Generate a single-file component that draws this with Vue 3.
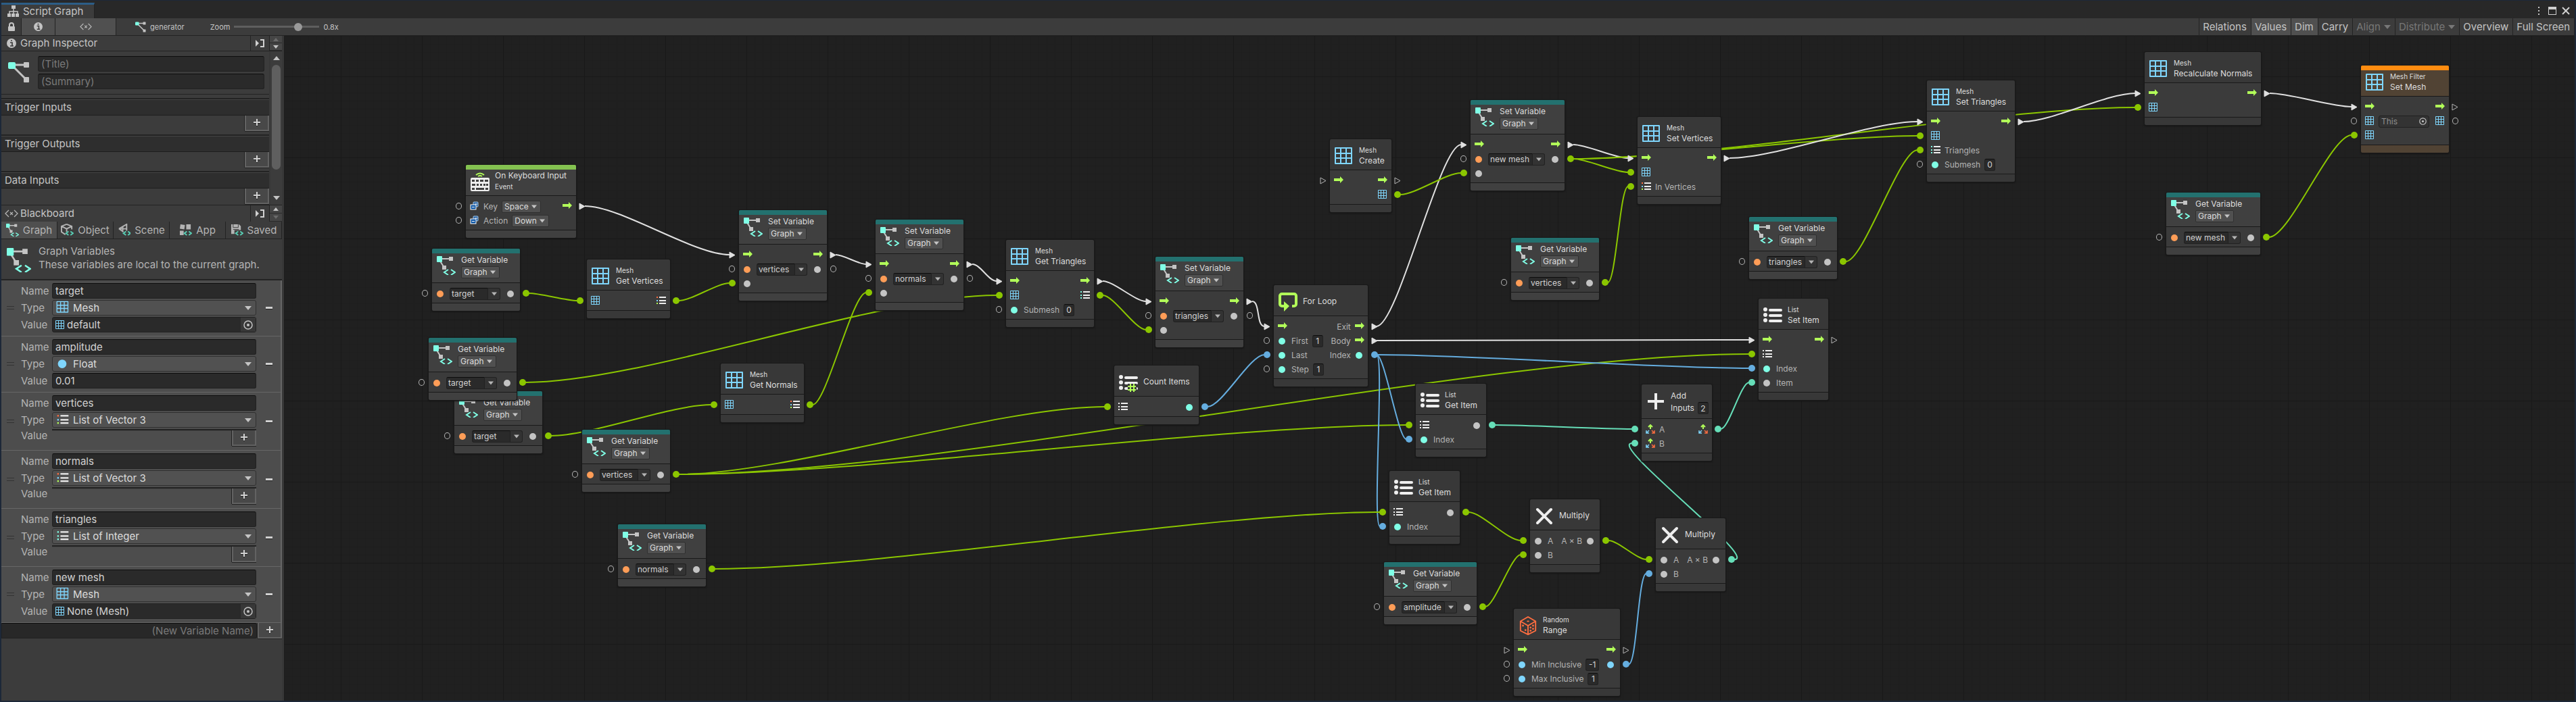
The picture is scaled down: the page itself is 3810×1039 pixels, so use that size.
<script setup>
import { ref, computed } from 'vue'

const zoom = ref(78)
const view = { x: 420, y: 53 }

const tools = [
  { text: 'Relations' },
  { text: 'Values', on: true },
  { text: 'Dim', on: true },
  { text: 'Carry' },
  { text: 'Align', menu: true },
  { text: 'Distribute', menu: true },
  { text: 'Overview' },
  { text: 'Full Screen' }
]
const sections = ['Trigger Inputs', 'Trigger Outputs', 'Data Inputs']
const scopes = [
  { text: 'Graph', icon: 'graphvar', on: true },
  { text: 'Object', icon: 'object' },
  { text: 'Scene', icon: 'scene' },
  { text: 'App', icon: 'app' },
  { text: 'Saved', icon: 'saved' }
]
const variables = ref([
  { name: 'target', type: 'Mesh', icon: 'mesh', object: 'default' },
  { name: 'amplitude', type: 'Float', icon: 'float', value: '0.01' },
  { name: 'vertices', type: 'List of Vector 3', icon: 'list-rgb', list: true },
  { name: 'normals', type: 'List of Vector 3', icon: 'list-rgb', list: true },
  { name: 'triangles', type: 'List of Integer', icon: 'list-int', list: true },
  { name: 'new mesh', type: 'Mesh', icon: 'mesh', object: 'None (Mesh)' }
])

const flow = (link, label) => ({ icon: 'flow', flow: true, link, label })
const port = (icon, link, extra) => ({ icon, link, ...extra })

const getVar = (id, x, y, name, w = 130) => ({
  id, x, y, w, kind: 'tall', strip: 'teal', icon: 'graphvar', title: 'Get Variable', scope: 'Graph',
  ins: [port('orange', '', { variable: name })], outs: [port('grey', 'green')]
})
const setVar = (id, x, y, name, w = 130, linked = '') => ({
  id, x, y, w, kind: 'tall', strip: 'teal', icon: 'graphvar', title: 'Set Variable', scope: 'Graph',
  ins: [flow('white'), port('orange', '', { variable: name }), port('grey', 'green')],
  outs: [flow('white'), port('grey', linked)]
})
const unit = (id, x, y, w, icon, over, title, ins, outs, extra = {}) => ({
  id, x, y, w, icon, over, title, ins, outs, kind: 'unit', ...extra
})

const nodes = [
  unit('key', 689, 244, 163, 'keyboard', '', 'On Keyboard Input',
    [port('enum', '', { label: 'Key', choice: 'Space' }), port('enum', '', { label: 'Action', choice: 'Down' })],
    [flow('white')], { strip: 'lime', under: 'Event' }),
  getVar('gTarget1', 639, 368, 'target'),
  unit('getVertices', 868, 384, 123, 'mesh', 'Mesh', 'Get Vertices', [port('mesh-s', 'green')], [port('list-rgb', 'green')]),
  setVar('sVertices', 1093, 311, 'vertices'),
  getVar('gTarget3', 672, 579, 'target'),
  getVar('gTarget2', 634, 500, 'target'),
  getVar('gVertices', 861, 636, 'vertices'),
  getVar('gNormals', 914, 776, 'normals'),
  unit('getNormals', 1066, 538, 123, 'mesh', 'Mesh', 'Get Normals', [port('mesh-s', 'green')], [port('list-rgb', 'green')]),
  setVar('sNormals', 1295, 325, 'normals'),
  unit('getTriangles', 1488, 355, 130, 'mesh', 'Mesh', 'Get Triangles',
    [flow('white'), port('mesh-s', 'green'), port('aqua', '', { label: 'Submesh', field: '0' })],
    [flow('white'), port('list-int', 'green')]),
  setVar('sTriangles', 1709, 380, 'triangles'),
  unit('count', 1648, 541, 125, 'count', '', 'Count Items', [port('list', 'green')], [port('aqua', 'blue')]),
  unit('loop', 1884, 422, 139, 'loop', '', 'For Loop',
    [flow('white'), port('aqua', '', { label: 'First', field: '1' }), port('aqua', 'blue', { label: 'Last' }), port('aqua', '', { label: 'Step', field: '1' })],
    [flow('white', 'Exit'), flow('white', 'Body'), port('aqua', 'blue', { label: 'Index' })]),
  unit('create', 1967, 206, 91, 'mesh', 'Mesh', 'Create', [flow('')], [flow(''), port('mesh-s', 'green')]),
  setVar('sNewMesh', 2175, 148, 'new mesh', 139, 'green'),
  unit('setVertices', 2422, 173, 123, 'mesh', 'Mesh', 'Set Vertices',
    [flow('white'), port('mesh-s', 'green'), port('list-rgb', 'green', { label: 'In Vertices' })], [flow('white')]),
  getVar('gVertices2', 2235, 352, 'vertices'),
  unit('setTriangles', 2850, 119, 130, 'mesh', 'Mesh', 'Set Triangles',
    [flow('white'), port('mesh-s', 'green'), port('list-int', 'green', { label: 'Triangles' }), port('aqua', '', { label: 'Submesh', field: '0' })],
    [flow('white')]),
  getVar('gTriangles', 2587, 321, 'triangles'),
  unit('recalc', 3172, 77, 172, 'mesh', 'Mesh', 'Recalculate Normals', [flow('white'), port('mesh-s', 'green')], [flow('white')]),
  unit('setMesh', 3492, 97, 130, 'mesh', 'Mesh Filter', 'Set Mesh',
    [flow('white'), port('mesh-s', '', { object: 'This' }), port('mesh-s', 'green')],
    [flow(''), port('mesh-s', '')], { strip: 'orange' }),
  getVar('gNewMesh', 3204, 285, 'new mesh', 139),
  unit('getItem1', 2094, 568, 104, 'list-lg', 'List', 'Get Item',
    [port('list', 'green'), port('aqua', 'blue', { label: 'Index' })], [port('grey', 'mint')]),
  unit('add', 2428, 569, 104, 'plus', '', 'Add',
    [port('vec', 'mint', { label: 'A' }), port('vec', 'mint', { label: 'B' })], [port('vec', 'mint')], { kind: 'tall plain', inputs: '2' }),
  unit('setItem', 2601, 442, 103, 'list-lg', 'List', 'Set Item',
    [flow('white'), port('list', 'green'), port('aqua', 'blue', { label: 'Index' }), port('grey', 'mint', { label: 'Item' })], [flow('')]),
  unit('getItem2', 2055, 697, 104, 'list-lg', 'List', 'Get Item',
    [port('list', 'green'), port('aqua', 'blue', { label: 'Index' })], [port('grey', 'green')]),
  unit('mul1', 2263, 739, 103, 'times', '', 'Multiply',
    [port('grey', 'green', { label: 'A' }), port('grey', 'green', { label: 'B' })], [port('grey', 'green', { label: 'A × B' })]),
  unit('mul2', 2449, 767, 103, 'times', '', 'Multiply',
    [port('grey', 'green', { label: 'A' }), port('grey', 'blue', { label: 'B' })], [port('grey', 'mint', { label: 'A × B' })]),
  getVar('gAmplitude', 2047, 832, 'amplitude', 137),
  unit('random', 2239, 901, 157, 'dice', 'Random', 'Range',
    [flow(''), port('sky', '', { label: 'Min Inclusive', field: '-1' }), port('sky', '', { label: 'Max Inclusive', field: '1' })],
    [flow(''), port('sky', 'blue')])
]

const links = [
  ['key', 0, 'sVertices', 0, 'white'], ['gTarget1', 0, 'getVertices', 0, 'green'], ['getVertices', 0, 'sVertices', 2, 'green'],
  ['sVertices', 0, 'sNormals', 0, 'white'], ['gTarget2', 0, 'getTriangles', 1, 'green'], ['gTarget3', 0, 'getNormals', 0, 'green'],
  ['getNormals', 0, 'sNormals', 2, 'green'], ['sNormals', 0, 'getTriangles', 0, 'white'], ['getTriangles', 0, 'sTriangles', 0, 'white'],
  ['getTriangles', 1, 'sTriangles', 2, 'green'], ['sTriangles', 0, 'loop', 0, 'white'], ['gVertices', 0, 'count', 0, 'green'],
  ['gVertices', 0, 'setItem', 1, 'green'], ['gVertices', 0, 'getItem1', 0, 'green'], ['count', 0, 'loop', 2, 'blue'],
  ['loop', 0, 'sNewMesh', 0, 'white'], ['loop', 1, 'setItem', 0, 'white'], ['loop', 2, 'setItem', 2, 'blue'],
  ['loop', 2, 'getItem1', 1, 'blue'], ['loop', 2, 'getItem2', 1, 'blue'], ['create', 1, 'sNewMesh', 2, 'green'],
  ['sNewMesh', 0, 'setVertices', 0, 'white'], ['sNewMesh', 1, 'setVertices', 1, 'green'], ['sNewMesh', 1, 'setTriangles', 1, 'green'],
  ['sNewMesh', 1, 'recalc', 1, 'green'], ['gVertices2', 0, 'setVertices', 2, 'green'], ['setVertices', 0, 'setTriangles', 0, 'white'],
  ['gTriangles', 0, 'setTriangles', 2, 'green'], ['setTriangles', 0, 'recalc', 0, 'white'], ['recalc', 0, 'setMesh', 0, 'white'],
  ['gNewMesh', 0, 'setMesh', 2, 'green'], ['gNormals', 0, 'getItem2', 0, 'green'], ['getItem2', 0, 'mul1', 0, 'green'],
  ['gAmplitude', 0, 'mul1', 1, 'green'], ['mul1', 0, 'mul2', 0, 'green'], ['random', 1, 'mul2', 1, 'blue'],
  ['getItem1', 0, 'add', 0, 'mint'], ['mul2', 0, 'add', 1, 'mint'], ['add', 0, 'setItem', 3, 'mint']
]

const byId = Object.fromEntries(nodes.map(n => [n.id, n]))
const portY = (n, i) => n.y - view.y + (n.kind.startsWith('tall') ? 50 : 45) + 16 + 21 * i

const curves = computed(() => links.map(([a, i, b, j, color]) => {
  const from = byId[a]
  const to = byId[b]
  const x1 = from.x - view.x + from.w + 13
  const x2 = to.x - view.x - 14
  const y1 = portY(from, i)
  const y2 = portY(to, j)
  const bend = Math.max(12, Math.abs(x2 - x1) / 4)
  return { color, d: `M${x1} ${y1}C${x1 + bend} ${y1} ${x2 - bend} ${y2} ${x2} ${y2}` }
}))
</script>

<template>
  <div class="window">
    <svg class="defs" aria-hidden="true">
      <symbol id="i-graphvar" viewBox="0 0 28 28">
        <path d="M5 4h15M4 6l7 11" stroke="#c4c4c4" stroke-width="2" fill="none" />
        <rect x="18" y="1" width="6" height="6" fill="#c4c4c4" /><rect x="8" y="14" width="6" height="6" fill="#c4c4c4" />
        <rect width="8" height="9" rx="1" fill="#80ffe6" />
        <path d="M17 20l-6 4 6 4M21 20l6 4-6 4" stroke="#80ffe6" stroke-width="2" fill="none" />
      </symbol>
      <symbol id="i-graph" viewBox="0 0 32 32">
        <path d="M6 5h20M7 7l20 20" stroke="#c4c4c4" stroke-width="3" fill="none" />
        <rect x="23" y="1" width="8" height="8" rx="1" fill="#c4c4c4" /><rect x="23" y="23" width="8" height="8" rx="1" fill="#c4c4c4" />
        <rect y="1" width="11" height="10" rx="2" fill="#80ffe6" />
      </symbol>
      <symbol id="i-mesh" viewBox="0 0 28 28">
        <path d="M1 2h24v23H1zM9 2v23M17 2v23M1 10h24M1 17h24" stroke="#7fd6fd" stroke-width="2" fill="none" stroke-linejoin="round" />
      </symbol>
      <symbol id="i-mesh-s" viewBox="0 0 14 16">
        <path d="M.5.5h12v12H.5zM4.500.5v12M8.500.5v12M.5 4.500h12M.5 8.500h12" stroke="#7fd6fd" fill="none" />
      </symbol>
      <symbol id="i-flow" viewBox="0 0 14 16"><path d="M0 4h9V1l5 5-5 5V8H0z" fill="#b2ff59" /></symbol>
      <symbol id="i-orange" viewBox="0 0 14 16"><circle cx="6" cy="8" r="5" fill="#ff9d57" /></symbol>
      <symbol id="i-grey" viewBox="0 0 14 16"><circle cx="6" cy="8" r="5" fill="#c4c4c4" /></symbol>
      <symbol id="i-aqua" viewBox="0 0 14 16"><circle cx="6" cy="8" r="5" fill="#80ffe6" /></symbol>
      <symbol id="i-sky" viewBox="0 0 14 16"><circle cx="6" cy="8" r="5" fill="#7fd6fd" /></symbol>
      <symbol id="i-float" viewBox="0 0 18 18"><circle cx="8" cy="10" r="6" fill="#7fd6fd" /></symbol>
      <symbol id="i-list" viewBox="0 0 14 16">
        <path d="M4 1h10v2H4zM4 6h10v2H4zM4 10h10v2H4z" fill="#eee" />
        <path d="M0 1h2v2H0zM0 6h2v2H0zM0 10h2v2H0z" fill="#eee" />
      </symbol>
      <symbol id="i-list-int" viewBox="0 0 14 16">
        <path d="M4 1h10v2H4zM4 6h10v2H4zM4 10h10v2H4z" fill="#eee" />
        <path d="M0 1h2v2H0zM0 6h2v2H0zM0 10h2v2H0z" fill="#80ffe6" />
      </symbol>
      <symbol id="i-list-rgb" viewBox="0 0 14 16">
        <path d="M4 1h10v2H4zM4 6h10v2H4zM4 10h10v2H4z" fill="#eee" />
        <path d="M0 1h2v2H0z" fill="#ff6e40" /><path d="M0 6h2v2H0z" fill="#7fd6fd" /><path d="M0 10h2v2H0z" fill="#b2ff59" />
      </symbol>
      <symbol id="i-list-lg" viewBox="0 0 28 28">
        <g fill="#eee"><circle cx="3" cy="5" r="3" /><circle cx="3" cy="13" r="3" /><circle cx="3" cy="21" r="3" />
          <rect x="8" y="4" width="20" height="4" rx="2" /><rect x="8" y="12" width="20" height="4" rx="2" /><rect x="8" y="20" width="20" height="4" rx="2" /></g>
      </symbol>
      <symbol id="i-count" viewBox="0 0 28 28">
        <g fill="#eee"><circle cx="3" cy="6" r="3" /><circle cx="3" cy="14" r="3" /><circle cx="3" cy="22" r="3" />
          <rect x="8" y="5" width="20" height="4" rx="2" /><rect x="8" y="13" width="20" height="4" rx="2" /><rect x="8" y="21" width="20" height="4" rx="2" /></g>
        <path d="M13 16h13v12H13z" fill="#383838" />
        <path d="M17 16v12M22 16v12M13 20h12M13 25h12" stroke="#b2ff59" stroke-width="2" />
      </symbol>
      <symbol id="i-loop" viewBox="0 0 28 28">
        <path d="M20 20h3a3 3 0 0 0 3-3V5a3 3 0 0 0-3-3H5a3 3 0 0 0-3 3v12a3 3 0 0 0 3 3h5" fill="none" stroke="#b2ff59" stroke-width="4" />
        <path d="M8 13l8 7-8 8z" fill="#b2ff59" />
      </symbol>
      <symbol id="i-plus" viewBox="0 0 28 28"><path d="M14 2v24M2 14h24" stroke="#eee" stroke-width="4" /></symbol>
      <symbol id="i-times" viewBox="0 0 28 28"><path d="M4 4l20 20M24 4L4 24" stroke="#eee" stroke-width="4" stroke-linecap="round" /></symbol>
      <symbol id="i-dice" viewBox="0 0 28 30">
        <path d="M14 1l12 7v15l-12 6L2 23V8zM2 8l12 7 12-7M14 15v14" fill="none" stroke="#ff6e40" stroke-width="2" stroke-linejoin="round" />
        <g fill="#ff6e40"><ellipse cx="14" cy="8" rx="2" ry="1" /><circle cx="6" cy="15" r="1.500" /><circle cx="10" cy="22" r="1.500" />
          <circle cx="18" cy="18" r="1.500" /><circle cx="18" cy="23" r="1.500" /><circle cx="22" cy="15" r="1.500" /><circle cx="22" cy="20" r="1.500" /></g>
      </symbol>
      <symbol id="i-keyboard" viewBox="0 0 28 28">
        <path d="M8 4q6-5 12 0M11 6q3-2 6 0" fill="none" stroke="#b2ff59" stroke-width="2" />
        <rect y="8" width="28" height="20" rx="2" fill="#eee" />
        <path d="M2 11h4v3H2zM8 11h4v3H8zM14 11h5v3h-5zM21 11h5v3h-5zM2 17h5v3H2zM9 17h3v3H9zM14 17h3v3h-3zM19 17h3v3h-3zM23 17h3v3h-3zM2 23h4v3H2zM8 23h12v3H8zM22 23h4v3h-4z" fill="#404040" />
      </symbol>
      <symbol id="i-enum" viewBox="0 0 14 16">
        <rect x="5" y="1" width="7" height="7" rx="1" fill="#1f5a9e" stroke="#a9cff0" /><path d="M7 4h4" stroke="#fff" />
        <rect x="1" y="5" width="8" height="7" fill="#0d56a6" stroke="#fff" /><path d="M3 8.500h4" stroke="#fff" />
      </symbol>
      <symbol id="i-vec" viewBox="0 0 14 16">
        <path d="M7 7V3M4 4l3-3 3 3" stroke="#b2ff59" stroke-width="2" fill="none" />
        <path d="M5 9l-4 4M1 9v4h4" stroke="#7fd6fd" stroke-width="1.500" fill="none" />
        <path d="M9 9l4 4M13 9v4H9" stroke="#ff6e40" stroke-width="1.500" fill="none" />
      </symbol>
      <symbol id="i-tree" viewBox="0 0 18 18">
        <path d="M9 4v8M3 13V9h12v4" fill="none" stroke="#c4c4c4" stroke-width="1.500" />
        <path d="M6 0h6v5H6zM0 12h5v5H0zM6 12h5v5H6zM12 12h5v5h-5z" fill="#c4c4c4" />
      </symbol>
      <symbol id="i-lock" viewBox="0 0 12 14"><path d="M3 7V4a3 3 0 0 1 6 0v3" fill="none" stroke="#c4c4c4" stroke-width="2" /><rect x="1" y="6" width="10" height="7" rx="1" fill="#c4c4c4" /></symbol>
      <symbol id="i-info" viewBox="0 0 14 14"><circle cx="7" cy="7" r="7" fill="#c4c4c4" /><path d="M5 6h3v5M5 11h5M6 3h2" stroke="#3c3c3c" stroke-width="1.700" fill="none" /></symbol>
      <symbol id="i-code" viewBox="0 0 20 12"><path d="M6 1L1 6l5 5M14 1l5 5-5 5M8 4l4 4M12 4L8 8" fill="none" stroke="#b4b4b4" stroke-width="1.300" /></symbol>
      <symbol id="i-dock" viewBox="0 0 14 12"><path d="M0 1l5 5-5 5z" fill="#d0d0d0" /><path d="M7 1h5v10H7" fill="none" stroke="#d0d0d0" stroke-width="2" /></symbol>
      <symbol id="i-down" viewBox="0 0 10 6"><path d="M0 0h10L5 6z" fill="currentColor" /></symbol>
      <symbol id="i-up" viewBox="0 0 10 6"><path d="M0 6h10L5 0z" fill="currentColor" /></symbol>
      <symbol id="i-add" viewBox="0 0 10 11"><path d="M0 6h10M5 1v10" stroke="#222" stroke-width="2" /><path d="M0 5h10M5 0v10" stroke="#d0d0d0" stroke-width="2" /></symbol>
      <symbol id="i-pick" viewBox="0 0 14 14"><circle cx="7" cy="7" r="6" fill="none" stroke="#c4c4c4" stroke-width="1.500" /><circle cx="7" cy="7" r="2" fill="#c4c4c4" /></symbol>
      <symbol id="i-object" viewBox="0 0 20 20">
        <path d="M9 1l8 3v5M9 1L1 4v9l6 4M1 4l8 4 8-4M9 8v5" fill="none" stroke="#b4b4b4" stroke-width="2" />
        <path d="M12 12l-4 3 4 3M15 12l4 3-4 3" fill="none" stroke="#58cdb4" stroke-width="2" />
      </symbol>
      <symbol id="i-scene" viewBox="0 0 20 20">
        <path d="M2 8l12-7v10M2 8l7 5M2 8h12M8 5v6" fill="none" stroke="#b4b4b4" stroke-width="2" />
        <path d="M13 12l-4 3 4 3M16 12l4 3-4 3" fill="none" stroke="#58cdb4" stroke-width="2" />
      </symbol>
      <symbol id="i-app" viewBox="0 0 20 20">
        <path d="M2 1l7 1-1 7-7-1zM11 1h7v8h-7zM1 11h6v7H1z" fill="#b4b4b4" />
        <path d="M12 12l-4 3 4 3M15 12l4 3-4 3" fill="none" stroke="#58cdb4" stroke-width="2" />
      </symbol>
      <symbol id="i-saved" viewBox="0 0 20 20">
        <path d="M1 1h12l3 3v6H6v6H1z" fill="#b4b4b4" /><path d="M4 1v5h8V1M4 9h9" stroke="#3c3c3c" fill="none" />
        <path d="M12 12l-4 3 4 3M15 12l4 3-4 3" fill="none" stroke="#58cdb4" stroke-width="2" />
      </symbol>
    </svg>

    <header class="tabbar">
      <div class="tab"><svg class="s18"><use href="#i-tree" /></svg>Script Graph</div>
      <div class="controls">
        <button aria-label="More"><svg width="4" height="14" viewBox="0 0 4 14"><path d="M1 1h2v2H1zM1 6h2v2H1zM1 11h2v2H1z" fill="#c4c4c4" /></svg></button>
        <button aria-label="Maximize"><svg width="12" height="12" viewBox="0 0 12 12"><path d="M0 0h12v12H0zM1 4v7h10V4z" fill="#d0d0d0" fill-rule="evenodd" /></svg></button>
        <button aria-label="Close"><svg width="12" height="12" viewBox="0 0 12 12"><path d="M1 1l10 10M11 1L1 11" stroke="#d0d0d0" stroke-width="2" /></svg></button>
      </div>
    </header>

    <div class="toolbar">
      <button class="lock" aria-label="Lock"><svg width="12" height="14"><use href="#i-lock" /></svg></button>
      <button class="info on" aria-label="Graph Inspector"><svg width="13" height="13"><use href="#i-info" /></svg></button>
      <button class="board on" aria-label="Blackboard"><svg width="18" height="11"><use href="#i-code" /></svg></button>
      <div class="crumb"><svg width="16" height="16"><use href="#i-graph" /></svg>generator</div>
      <label class="zoom">Zoom<input v-model="zoom" type="range" min="0" max="100"><span>0.8x</span></label>
      <div class="tools">
        <button v-for="t in tools" :key="t.text" :class="{ on: t.on }" :disabled="t.menu">
          {{ t.text }}<svg v-if="t.menu" width="10" height="6"><use href="#i-down" /></svg>
        </button>
      </div>
    </div>

    <div class="main">
      <aside class="side">
        <div class="bar">
          <svg class="lead" width="14" height="14"><use href="#i-info" /></svg><span class="grow">Graph Inspector</span>
          <button class="dock" aria-label="Dock"><svg width="14" height="12"><use href="#i-dock" /></svg></button>
          <div class="order"><button disabled aria-label="Up"><svg width="8" height="5"><use href="#i-up" /></svg></button><button aria-label="Down"><svg width="8" height="5"><use href="#i-down" /></svg></button></div>
        </div>
        <div class="inspector">
          <div class="content">
            <div class="about">
              <svg width="32" height="32"><use href="#i-graph" /></svg>
              <div class="fields"><input placeholder="(Title)" aria-label="Title"><input placeholder="(Summary)" aria-label="Summary"></div>
            </div>
            <section v-for="s in sections" :key="s" class="ports">
              <h3>{{ s }}</h3>
              <button class="addbtn" :aria-label="'Add to ' + s"><svg width="10" height="11"><use href="#i-add" /></svg></button>
            </section>
          </div>
          <div class="scroll">
            <svg width="10" height="6"><use href="#i-up" /></svg>
            <div class="thumb"></div>
            <svg width="10" height="6"><use href="#i-down" /></svg>
          </div>
        </div>

        <div class="bar second">
          <svg class="lead wide" width="20" height="12"><use href="#i-code" /></svg><span class="grow">Blackboard</span>
          <button class="dock" aria-label="Dock"><svg width="14" height="12"><use href="#i-dock" /></svg></button>
          <div class="order"><button aria-label="Up"><svg width="8" height="5"><use href="#i-up" /></svg></button><button disabled aria-label="Down"><svg width="8" height="5"><use href="#i-down" /></svg></button></div>
        </div>
        <div class="scopes">
          <button v-for="s in scopes" :key="s.text" :class="{ on: s.on }"><svg width="19" height="19"><use :href="'#i-' + s.icon" /></svg>{{ s.text }}</button>
        </div>
        <div class="intro">
          <svg width="36" height="36"><use href="#i-graphvar" /></svg>
          <div><p>Graph Variables</p><p>These variables are local to the current graph.</p></div>
        </div>
        <div class="vars">
          <div v-for="(v, i) in variables" :key="i" class="var">
            <span class="grip"></span>
            <div class="rows">
              <label>Name<input v-model="v.name"></label>
              <label>Type
                <span class="pick">
                  <svg :class="v.icon"><use :href="'#i-' + v.icon" /></svg>
                  <select><option>{{ v.type }}</option></select>
                  <svg class="arrow" width="10" height="6"><use href="#i-down" /></svg>
                </span>
              </label>
              <div v-if="v.list" class="line items"><span>Value</span>
                <span class="empty"><button class="addbtn" aria-label="Add item"><svg width="10" height="11"><use href="#i-add" /></svg></button></span>
              </div>
              <div v-else-if="v.object" class="line"><span>Value</span>
                <span class="objectbox"><svg width="14" height="16"><use href="#i-mesh-s" /></svg><span class="grow">{{ v.object }}</span>
                  <button aria-label="Select object"><svg width="14" height="14"><use href="#i-pick" /></svg></button></span>
              </div>
              <label v-else>Value<input v-model="v.value"></label>
            </div>
            <button class="minus" aria-label="Remove variable"></button>
          </div>
        </div>
        <div class="newvar">
          <input placeholder="(New Variable Name)" aria-label="New variable name">
          <button class="addbtn" aria-label="Add variable"><svg width="10" height="11"><use href="#i-add" /></svg></button>
        </div>
      </aside>

      <main class="canvas">
        <svg class="wires"><path v-for="(c, i) in curves" :key="i" :class="c.color" :d="c.d" /></svg>
        <article v-for="n in nodes" :key="n.id" class="node" :class="[n.kind, n.strip]"
          :style="{ left: n.x - view.x + 'px', top: n.y - view.y + 'px', width: n.w + 'px' }">
          <div v-if="n.strip" class="strip"></div>
          <div class="head">
            <svg class="big"><use :href="'#i-' + n.icon" /></svg>
            <div class="names">
              <small v-if="n.over">{{ n.over }}</small>
              <span>{{ n.title }}</span>
              <small v-if="n.under">{{ n.under }}</small>
              <span v-if="n.scope" class="choice"><select aria-label="Scope"><option>{{ n.scope }}</option></select><svg width="8" height="6"><use href="#i-down" /></svg></span>
              <label v-if="n.inputs" class="inputs">Inputs<input class="num" :value="n.inputs"></label>
            </div>
          </div>
          <div class="body">
            <div class="ins">
              <div v-for="(p, i) in n.ins" :key="i" class="port">
                <i class="plug in" :class="[p.flow ? 'tri' : 'dot', p.link || 'open']"><svg v-if="p.flow" width="10" height="11" viewBox="0 0 10 11"><path d="M1 1l8 4.500L1 10z" /></svg></i>
                <svg class="pin"><use :href="'#i-' + p.icon" /></svg>
                <span v-if="p.variable" class="combo"><input :value="p.variable" aria-label="Variable"><button aria-label="Variables"><svg width="8" height="6"><use href="#i-down" /></svg></button></span>
                <span v-else-if="p.object" class="ref"><span class="grow">{{ p.object }}</span><svg width="11" height="11"><use href="#i-pick" /></svg></span>
                <label v-else-if="p.label">{{ p.label }}
                  <span v-if="p.choice" class="choice"><select><option>{{ p.choice }}</option></select><svg width="8" height="6"><use href="#i-down" /></svg></span>
                  <input v-if="p.field" class="num" :class="{ long: p.field.length > 1 }" :value="p.field">
                </label>
              </div>
            </div>
            <div class="outs">
              <div v-for="(p, i) in n.outs" :key="i" class="port">
                <span v-if="p.label">{{ p.label }}</span>
                <svg class="pin"><use :href="'#i-' + p.icon" /></svg>
                <i class="plug out" :class="[p.flow ? 'tri' : 'dot', p.link || 'open']"><svg v-if="p.flow" width="10" height="11" viewBox="0 0 10 11"><path d="M1 1l8 4.500L1 10z" /></svg></i>
              </div>
            </div>
          </div>
          <div class="foot"></div>
        </article>
      </main>
    </div>
  </div>
</template>

<style>
body { margin: 0; background: #282828; }
</style>

<style scoped>
* { box-sizing: border-box; }
.window {
  height: 100vh; display: flex; flex-direction: column; overflow: hidden;
  font: 15px/20px Inter, sans-serif; color: #c4c4c4; background: #282828;
  border: solid #1d2838; border-width: 1px 2px 2px;
}
button, input, select { font: inherit; color: inherit; margin: 0; padding: 0; border: 0; background: none; border-radius: 0; outline: 0; min-width: 0; appearance: none; }
button { display: flex; align-items: center; justify-content: center; }
svg { flex: none; display: block; }
.defs { position: absolute; width: 0; height: 0; }
.grow { flex: 1; }
.s18 { width: 18px; height: 18px; }

.tabbar { height: 26px; display: flex; justify-content: space-between; flex: none; padding-top: 3px; }
.tab { width: 138px; border-top: 3px solid #2c5d87; background: #3c3c3c; border-right: 1px solid #222; display: flex; align-items: center; gap: 5px; padding-left: 9px; }
.controls { display: flex; align-items: center; padding-right: 7px; gap: 12px; }
.controls button:last-child { margin-left: -4px; }

.toolbar { height: 26px; flex: none; display: flex; background: #3c3c3c; border-bottom: 1px solid #232323; }
.toolbar button { border-right: 1px solid #232323; }
.toolbar .on { background: #505050; }
.lock { width: 30px; }
.info { width: 50px; }
.board { width: 90px; }
.crumb { display: flex; align-items: center; gap: 6px; margin-left: 28px; font-size: 11px; }
.zoom { display: flex; align-items: center; gap: 6px; margin-left: 38px; font-size: 11px; }
.zoom input { width: 126px; height: 12px; background: linear-gradient(#5e5e5e, #5e5e5e) center / 100% 3px no-repeat; }
.zoom input::-webkit-slider-thumb { appearance: none; width: 12px; height: 12px; border-radius: 50%; background: #999; }
.tools { margin-left: auto; display: flex; border-left: 1px solid #232323; }
.tools button { padding: 0 6px 0 5px; gap: 5px; }
.tools button:disabled { color: #777; }

.main { flex: 1; min-height: 0; display: flex; }
.side { width: 418px; flex: none; background: #3c3c3c; border-right: 3px solid #383838; overflow: hidden; }
.bar { height: 23px; display: flex; align-items: center; border-bottom: 1px solid #232323; }
.bar.second { height: 25px; border-top: 1px solid #232323; border-bottom: 0; }
.lead { margin: 0 6px 0 8px; }
.lead.wide { margin: 0 3px 0 5px; }
.dock { width: 28px; align-self: stretch; border-left: 1px solid #232323; }
.order { width: 19px; align-self: stretch; display: flex; flex-direction: column; border-left: 1px solid #232323; }
.order button { flex: 1; background: #454545; border-bottom: 1px solid #2a2a2a; }
.order button:disabled { color: #6a6a6a; }

.inspector { display: flex; height: 227px; overflow: hidden; }
.content { flex: 1; }
.about { display: flex; gap: 12px; padding: 7px 7px 6px 10px; height: 64px; border-bottom: 1px solid #232323; }
.about > svg { margin-top: 8px; }
.fields { flex: 1; display: flex; flex-direction: column; gap: 3px; }
.side input { height: 23px; background: #2a2a2a; border: 1px solid #212121; border-top-color: #0d0d0d; border-radius: 3px; padding: 0 4px; color: #d2d2d2; }
.side input::placeholder { color: #7a7a7a; opacity: 1; }
.ports { margin-top: 5px; height: 49px; border-top: 2px solid #232323; }
.ports h3 { margin: 0; font-size: 15px; font-weight: 400; line-height: 22px; height: 24px; padding-left: 5px; background: #2e2e2e; border: solid #444; border-width: 1px 0; border-bottom-color: #1e1e1e; }
.addbtn { width: 36px; height: 23px; border: solid #626262; border-width: 0 2px 2px; background: #484848; box-shadow: 0 1px #232323, -1px 0 #232323; }
.ports .addbtn { margin-left: auto; }
.scroll { width: 19px; display: flex; flex-direction: column; align-items: center; padding: 7px 0; gap: 7px; border-left: 2px solid #383838; color: #c4c4c4; }
.thumb { width: 13px; height: 155px; border-radius: 7px; background: #5f5f5f; }
.scroll svg:last-child { margin-top: auto; }

.scopes { display: flex; height: 26px; border-bottom: 1px solid #232323; }
.scopes button { flex: 1; border-right: 1px solid #232323; gap: 6px; color: #b4b4b4; }
.scopes .on { background: #4f4f4f; }
.intro { height: 61px; display: flex; gap: 11px; padding: 8px 8px 0; border-bottom: 2px solid #232323; color: #b4b4b4; white-space: nowrap; }
.intro svg { margin-top: 5px; }
.intro p { margin: 0; }

.vars { background: #4d4d4d; border-right: 2px solid #666; }
.var { display: flex; align-items: center; padding: 4px 0 5px; border-bottom: 1px solid #666; }
.grip { width: 11px; height: 5px; margin: 0 10px 0 8px; border: solid #333; border-width: 1px 0; }
.rows { width: 348px; display: grid; gap: 2px; color: #b4b4b4; }
.rows label, .line { display: grid; grid-template-columns: 46px 1fr; align-items: center; height: 23px; }
.line.items { height: 26px; align-items: start; }
.pick { position: relative; display: flex; align-items: center; height: 23px; background: #515151; border: 1px solid #303030; border-radius: 3px; }
.pick > svg:first-child { position: absolute; left: 5px; top: 0; width: 20px; height: 19px; }
.pick > svg.list-rgb, .pick > svg.list-int { top: 2px; }
.pick select { width: 100%; height: 21px; padding-left: 30px; color: #dcdcdc; }
.arrow { position: absolute; right: 6px; color: #c4c4c4; }
.empty { display: flex; justify-content: flex-end; border-top: 2px solid #232323; box-shadow: inset 0 1px #444; height: 25px; }
.objectbox { display: flex; align-items: center; gap: 3px; height: 23px; padding-left: 4px; background: #2a2a2a; border: 1px solid #212121; border-radius: 3px; color: #d2d2d2; }
.objectbox > svg { margin-top: 3px; }
.objectbox button { width: 22px; height: 21px; background: #383838; }
.minus { width: 10px; height: 3px; margin-left: 14px; background: #d0d0d0; box-shadow: 0 1px #222; }
.newvar { display: flex; gap: 1px; }
.newvar input { flex: 1; text-align: right; background: #282828; border-radius: 0 3px 3px 0; }

.canvas {
  flex: 1; position: relative; overflow: hidden; background-color: #202020;
  background-image: linear-gradient(#191919 1px, transparent 1px), linear-gradient(90deg, #191919 1px, transparent 1px),
    linear-gradient(#1e1e1e 1px, transparent 1px), linear-gradient(90deg, #1e1e1e 1px, transparent 1px);
  background-size: 120px 120px, 120px 120px, 12px 12px, 12px 12px;
  background-position: 0 60px, 84px 0, 0 0, 0 0;
}
.wires { position: absolute; inset: 0; width: 100%; height: 100%; fill: none; stroke-width: 2; }
.wires .white { stroke: #e0e0e0; }
.wires .green { stroke: #8bc600; }
.wires .blue { stroke: #65addf; }
.wires .mint { stroke: #66deb8; }

.node { position: absolute; font-size: 12px; line-height: 16px; background: #383838; border-radius: 2px; box-shadow: 0 0 0 1px #191919, 0 1px 2px 1px #161616; }
.node.tall, .node.lime { background: #404040; }
.node.plain { background: #383838; }
.node.orange { background: #514334; }
.strip { height: 7px; border-radius: 2px 2px 0 0; background: #23716f; }
.lime .strip { background: #84c250; }
.orange .strip { background: #ff8c10; }
.head { height: 45px; padding: 8px 0 0 7px; display: flex; gap: 8px; color: #dedede; }
.tall .head { height: 50px; }
.strip + .head { height: 38px; padding-top: 1px; }
.tall .strip + .head { height: 43px; }
.big { width: 28px; height: 28px; margin-top: 3px; }
.names { display: flex; flex-direction: column; justify-content: center; align-items: flex-start; height: 32px; white-space: nowrap; }
.tall .names { height: 36px; }
.tall .names > span:first-child { line-height: 18px; }
small { font-size: 10px; }
.choice { display: inline-flex; align-items: center; position: relative; height: 18px; background: #505050; border: 1px solid #303030; border-radius: 2px; color: #dedede; }
.choice select { height: 16px; padding: 0 17px 0 3px; }
.choice svg { position: absolute; right: 5px; color: #c4c4c4; pointer-events: none; }
.inputs { display: flex; align-items: center; gap: 5px; }
.num { width: 16px; height: 18px; text-align: center; background: #2a2a2a; border: 1px solid #212121; border-top-color: #0d0d0d; border-radius: 3px; color: #d2d2d2; }
.num.long { width: 20px; }

.body { display: flex; background: #3b3b3b; border-top: 1px solid #191919; padding: 5px 0 3px; color: #b4b4b4; }
.ins { flex: 1; }
.outs { flex: none; }
.port { position: relative; height: 21px; display: flex; align-items: center; gap: 6px; padding: 0 6px; white-space: nowrap; }
.outs .port { justify-content: flex-end; }
.ins .port { padding-right: 3px; }
.pin { width: 14px; height: 16px; }
.port label { display: flex; align-items: center; gap: 6px; }
.combo { flex: 1; display: flex; height: 18px; }
.combo input { flex: 1; width: 0; background: #2a2a2a; border: 1px solid #212121; border-top-color: #0d0d0d; border-radius: 3px 0 0 3px; padding-left: 2px; color: #d2d2d2; }
.combo button { width: 18px; background: #333; border: 1px solid #212121; border-left: 0; border-radius: 0 3px 3px 0; }
.ref { flex: 1; display: flex; align-items: center; height: 18px; padding: 0 3px; background: #333; border: 1px solid #212121; border-radius: 3px; color: #8f8f8f; }
.plug { position: absolute; width: 10px; height: 11px; top: 5px; }
.plug.in { left: -15px; }
.plug.out { right: -14px; }
.plug.dot { height: 10px; border-radius: 50%; }
.plug.dot.open { width: 9px; height: 10px; border: 1px solid #b4b4b4; }
.plug.green { background: #8bc600; }
.plug.blue { background: #65addf; }
.plug.mint { background: #66deb8; }
.plug.tri svg { fill: #e0e0e0; stroke: #e0e0e0; }
.plug.tri.open svg { fill: #202020; stroke: #b4b4b4; }
.foot { height: 12px; border-top: 1px solid #191919; }
</style>
